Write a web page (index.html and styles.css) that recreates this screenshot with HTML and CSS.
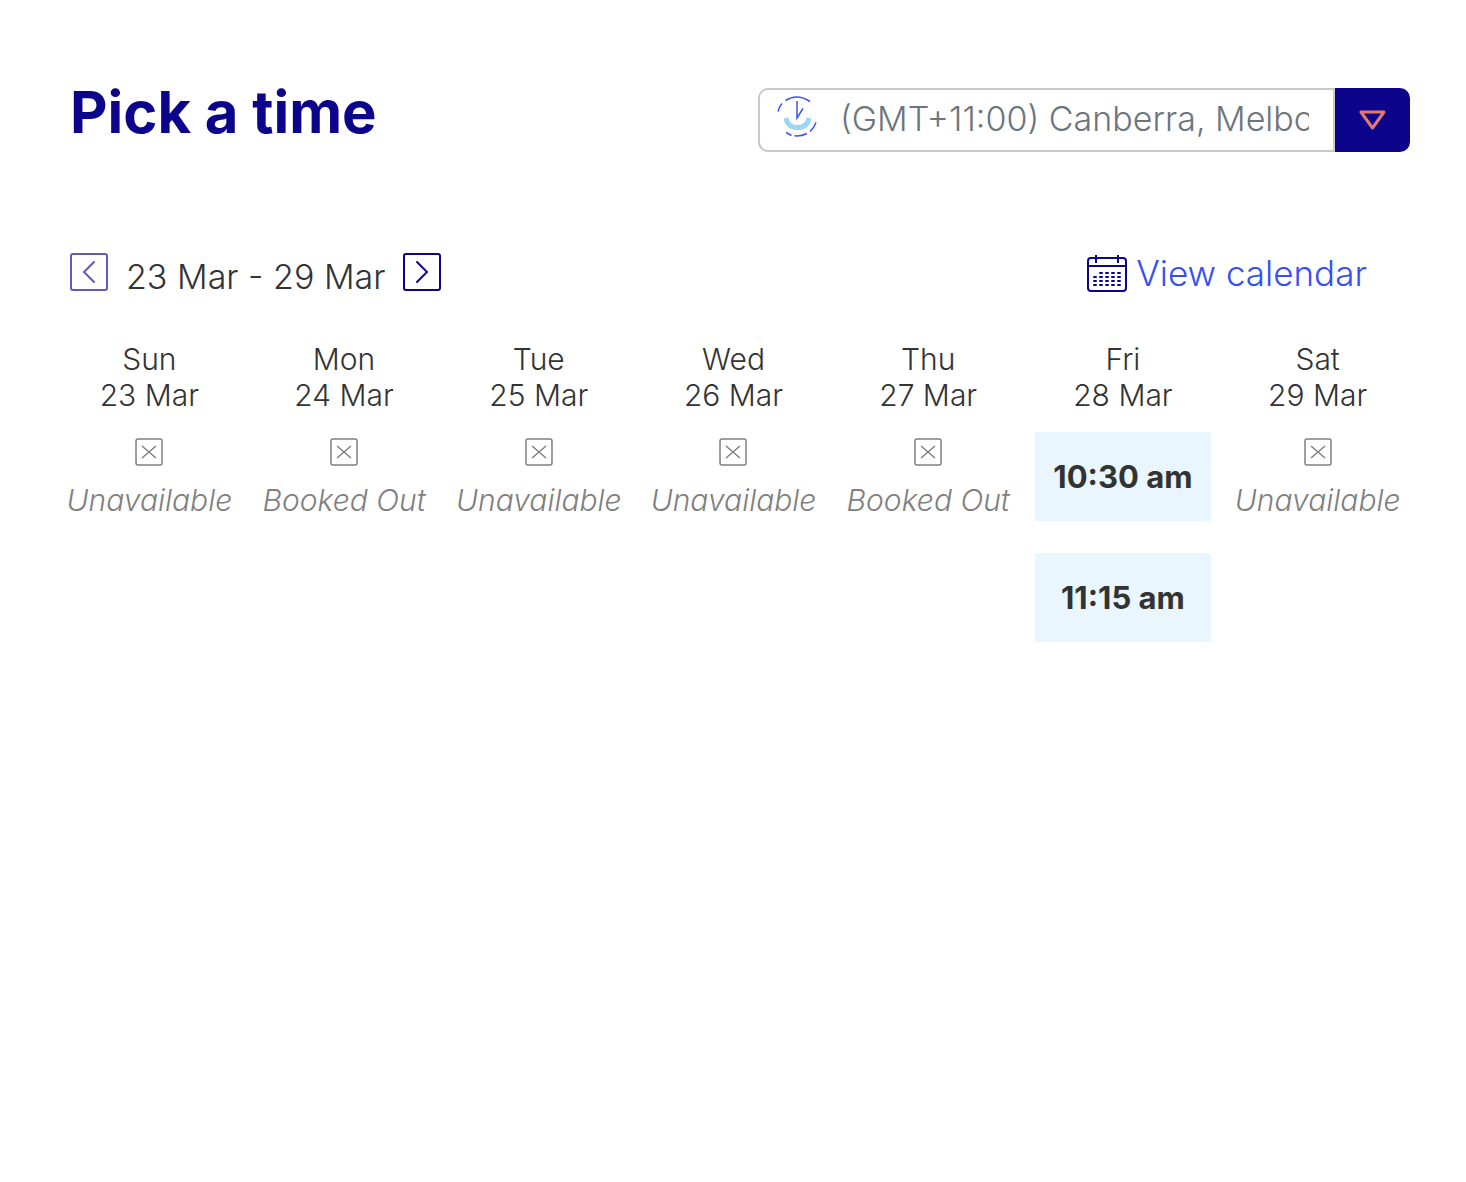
FILE: index.html
```html
<!DOCTYPE html>
<html lang="en">
<head>
    <meta charset="UTF-8">
    <meta name="viewport" content="width=device-width, initial-scale=1.0">
    <title>Pick a time</title>
    <link rel="stylesheet" href="styles.css">
</head>
<body>
    <main class="picker">
        <header class="top">
            <h1>Pick a time</h1>
            <div class="timezone">
                <svg class="clock" viewBox="0 0 42 44" fill="none" stroke="#3d52f0" stroke-width="1.5" aria-hidden="true">
                    <path d="M10 23C11 29 15 32.500 21.500 32.500S32 29 33 23" stroke="#9fd5f4" stroke-width="5"/>
                    <path d="M9.500 5.500Q21-2 34 6.500M2 16.500Q3 12 6 8.500M40 27.500Q38 33 34 36.500M31 38.500Q25 41.500 18.500 40.800M15.500 40.500L10 37.500M21 6V23L27 13.500"/>
                </svg>
                <input class="zone-text" type="text" aria-label="Time zone" value="(GMT+11:00) Canberra, Melbourne, Sydney">
                <button class="zone-open" type="button" aria-label="Show time zones">
                    <svg width="28" height="20" viewBox="0 0 28 20" fill="none" stroke="#e5796d" stroke-width="3" stroke-linejoin="round"><path d="M2 2H25L13.500 18Z"/></svg>
                </button>
            </div>
        </header>

        <div class="toolbar">
            <div class="range">
                <button class="arrow prev" type="button" aria-label="Previous week">
                    <svg viewBox="0 0 38 38"><rect x="1" y="1" width="36" height="36" rx="2"/><path d="M24 9L14 19L24 29"/></svg>
                </button>
                <span class="dates">23 Mar - 29 Mar</span>
                <button class="arrow" type="button" aria-label="Next week">
                    <svg viewBox="0 0 38 38"><rect x="1" y="1" width="36" height="36" rx="2"/><path d="M14 9L24 19L14 29"/></svg>
                </button>
            </div>
            <a class="calendar-link" href="#">
                <svg width="40" height="38" viewBox="0 0 40 38" fill="none" stroke="#0c058c" stroke-width="2" aria-hidden="true">
                    <rect x="1" y="4" width="38" height="33" rx="3"/>
                    <path d="M1 12H39M9 1V9M31 1V9"/>
                    <path stroke-linecap="round" d="M13 19h2M19 19h2M25 19h2M31 19h2M7 23h2M13 23h2M19 23h2M25 23h2M31 23h2M7 27h2M13 27h2M19 27h2M25 27h2M31 27h2M7 31h2M13 31h2M19 31h2M25 31h2M31 31h2"/>
                </svg>
                View calendar
            </a>
        </div>

        <svg class="symbols" aria-hidden="true">
            <symbol id="cross" viewBox="0 0 28 28">
                <rect x="1" y="1" width="26" height="26" rx="2"/>
                <path d="M7 8L21 20M21 8L7 20"/>
            </symbol>
        </svg>

        <div class="week">
            <section class="day">
                <h2>Sun<br>23 Mar</h2>
                <svg class="cross"><use href="#cross"/></svg>
                <p class="status">Unavailable</p>
            </section>
            <section class="day">
                <h2>Mon<br>24 Mar</h2>
                <svg class="cross"><use href="#cross"/></svg>
                <p class="status">Booked Out</p>
            </section>
            <section class="day">
                <h2>Tue<br>25 Mar</h2>
                <svg class="cross"><use href="#cross"/></svg>
                <p class="status">Unavailable</p>
            </section>
            <section class="day">
                <h2>Wed<br>26 Mar</h2>
                <svg class="cross"><use href="#cross"/></svg>
                <p class="status">Unavailable</p>
            </section>
            <section class="day">
                <h2>Thu<br>27 Mar</h2>
                <svg class="cross"><use href="#cross"/></svg>
                <p class="status">Booked Out</p>
            </section>
            <section class="day">
                <h2>Fri<br>28 Mar</h2>
                <button class="slot" type="button">10:30 am</button>
                <button class="slot" type="button">11:15 am</button>
            </section>
            <section class="day">
                <h2>Sat<br>29 Mar</h2>
                <svg class="cross"><use href="#cross"/></svg>
                <p class="status">Unavailable</p>
            </section>
        </div>
    </main>
</body>
</html>
```
FILE: styles.css
```css
*{
    box-sizing: border-box;
}
body{
    margin: 0;
    background-color: #fff;
    color: #333;
    font-family: Inter, "Liberation Sans", sans-serif;
}
button, input{
    font-family: inherit;
    margin: 0;
    padding: 0;
    border: 0;
}
svg{
    display: block;
    flex-shrink: 0;
}
.picker{
    padding: 88px 51px 32px 52px;
}

/* title and time zone */
.top{
    display: flex;
    justify-content: space-between;
    align-items: flex-start;
    padding: 0 5px 0 18px;
}
h1{
    margin: 0;
    color: #0c058c;
    font-size: 58px;
    line-height: 48px;
    font-weight: 700;
}
.timezone{
    display: flex;
    position: relative;
    width: 652px;
    height: 64px;
}
.clock{
    position: absolute;
    left: 18px;
    top: 7px;
    width: 42px;
    height: 44px;
}
.zone-text{
    flex: 1;
    min-width: 0;
    padding: 0 24px 4px 80px;
    border: 2px solid #c8c8c8;
    border-radius: 10px 0 0 10px;
    background-color: #fff;
    color: #6c757d;
    font-size: 34px;
    font-weight: 300;
}
.zone-open{
    display: flex;
    align-items: center;
    justify-content: center;
    width: 75px;
    border-radius: 0 10px 10px 0;
    background-color: #0c058c;
}

/* week switcher */
.toolbar{
    display: flex;
    justify-content: space-between;
    align-items: flex-start;
    margin-top: 101px;
    padding: 0 48px 0 18px;
}
.range{
    display: flex;
    gap: 18px;
}
.dates{
    font-size: 34px;
    line-height: 48px;
    font-weight: 300;
}
.arrow{
    width: 38px;
    height: 38px;
    background: none;
}
.arrow svg{
    width: 38px;
    height: 38px;
    fill: none;
    stroke: #0c058c;
    stroke-width: 2;
    stroke-linecap: round;
}
.prev{
    opacity: .65;
}
.calendar-link{
    display: flex;
    align-items: center;
    gap: 9px;
    color: #364ff5;
    font-size: 35px;
    line-height: 40px;
    font-weight: 300;
    text-decoration: none;
}

/* days */
.symbols{
    display: none;
}
.week{
    display: grid;
    grid-template-columns: repeat(7, 1fr);
    margin-top: 40px;
}
.day{
    display: flex;
    flex-direction: column;
    align-items: center;
}
h2{
    margin: 0 0 19px;
    font-size: 30px;
    line-height: 36px;
    font-weight: 300;
    text-align: center;
}
.cross{
    width: 28px;
    height: 28px;
    margin-top: 6px;
    fill: none;
    stroke: #808080;
    stroke-width: 1.5;
}
.status{
    margin: 16px 0 0;
    color: #808080;
    font-size: 30px;
    line-height: 36px;
    font-weight: 300;
    font-style: italic;
    white-space: nowrap;
}
.slot{
    width: 176px;
    height: 89px;
    margin-bottom: 32px;
    background-color: #eaf6fd;
    color: #333;
    font-size: 31px;
    font-weight: 700;
}
```
